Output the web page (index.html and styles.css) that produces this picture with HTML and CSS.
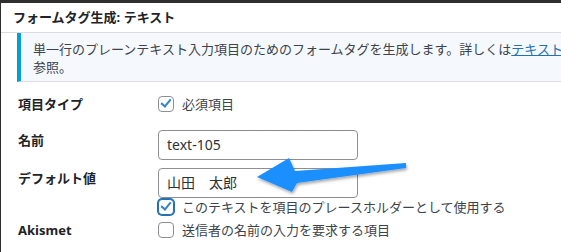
FILE: index.html
```html
<html>
<head>
<title>フォームタグ生成: テキスト</title>
<link rel="stylesheet" href="styles.css">
</head>
<body>
<div class="dialog">
  <div class="dialog-title">フォームタグ生成: テキスト</div>
  <div class="dialog-body">
    <div class="notice">
      <p class="nowrap">単一行のプレーンテキスト入力項目のためのフォームタグを生成します。詳しくは<a href="#">テキスト項目</a>を<br>参照。</p>
    </div>

    <div class="form">
      <div class="row row-type">
        <div class="label">項目タイプ</div>
        <div class="field">
          <label class="check"><span class="box checked"></span>必須項目</label>
        </div>
      </div>
      <div class="row row-name">
        <div class="label">名前</div>
        <div class="field">
          <div class="input">text-105</div>
        </div>
      </div>
      <div class="row row-default">
        <div class="label">デフォルト値</div>
        <div class="field">
          <div class="input">山田　太郎</div>
          <label class="check check-sub"><span class="box checked focus"></span>このテキストを項目のプレースホルダーとして使用する</label>
        </div>
      </div>
      <div class="row row-akismet">
        <div class="label label-latin">Akismet</div>
        <div class="field">
          <label class="check"><span class="box"></span>送信者の名前の入力を要求する項目</label>
        </div>
      </div>
    </div>
  </div>
</div>

<!-- annotation arrow drawn on top of the screenshot -->
<svg class="arrow" width="561" height="252" viewBox="0 0 561 252">
  <defs>
    <filter id="shadow" x="-10%" y="-30%" width="130%" height="180%">
      <feDropShadow dx="1" dy="2" stdDeviation="1.5" flood-color="#000" flood-opacity="0.35"/>
    </filter>
  </defs>
  <polygon filter="url(#shadow)" fill="#1f8fff"
    points="406,163 406,168 297,183 292,192 257,177 289,158 295,171"/>
</svg>
</body>
</html>
```

FILE: styles.css
```css
html, body { margin:0; padding:0; }
body {
  background:#2f2f2f;
  overflow:hidden;
  font-family:"Noto Sans", "Noto Sans CJK JP", sans-serif;
  color:#3c434a;
  font-size:13px;
}
.dialog {
  margin:3px 0 0 1px;
  width:700px;
  height:260px;
  background:#fff;
}
.dialog-title {
  height:29px;
  line-height:29px;
  padding-left:12px;
  border-bottom:1px solid #dcdcde;
  font-size:13px;
  font-weight:bold;
  color:#1d2327;
}
.dialog-body { padding:0 0 0 16px; }

.notice {
  background:#f5f9fd;
  border-left:4px solid #00a0d2;
  border-bottom:1px solid #dcdcde;
  padding:7px 12px 5px;
}
.notice p { margin:0; line-height:18px; }
.nowrap { white-space:nowrap; }
.notice a { color:#2271b1; text-decoration:underline; }

.form { padding-top:9px; }
.row { display:flex; }
.label {
  width:140px;
  flex:none;
  padding-left:1px;
  font-weight:bold;
  color:#1d2327;
  line-height:20px;
}
.field { flex:1; }

.row-type { height:36px; padding-top:3px; }
.row-name { height:38px; }
.row-akismet { padding-top:3px; }

.input {
  width:182px;
  height:28px;
  border:1px solid #8c8f94;
  border-radius:4px;
  padding:0 8px;
  line-height:28px;
  font-size:14px;
  color:#2c3338;
}
.check {
  display:flex;
  align-items:center;
  gap:8px;
  line-height:20px;
  color:#3c434a;
}
.check-sub { margin-top:-1px; }
.box {
  width:14px;
  height:14px;
  border:1px solid #8c8f94;
  border-radius:4px;
  background:#fff;
  position:relative;
  flex:none;
}
.box.checked::after {
  content:"";
  position:absolute;
  left:4px;
  top:0px;
  width:4px;
  height:8px;
  border:solid #3582c4;
  border-width:0 2px 2px 0;
  transform:rotate(40deg);
}
.box.focus {
  border-color:#2271b1;
  box-shadow:0 0 0 1px #2271b1;
}

.arrow { position:absolute; left:0; top:0; }
```
